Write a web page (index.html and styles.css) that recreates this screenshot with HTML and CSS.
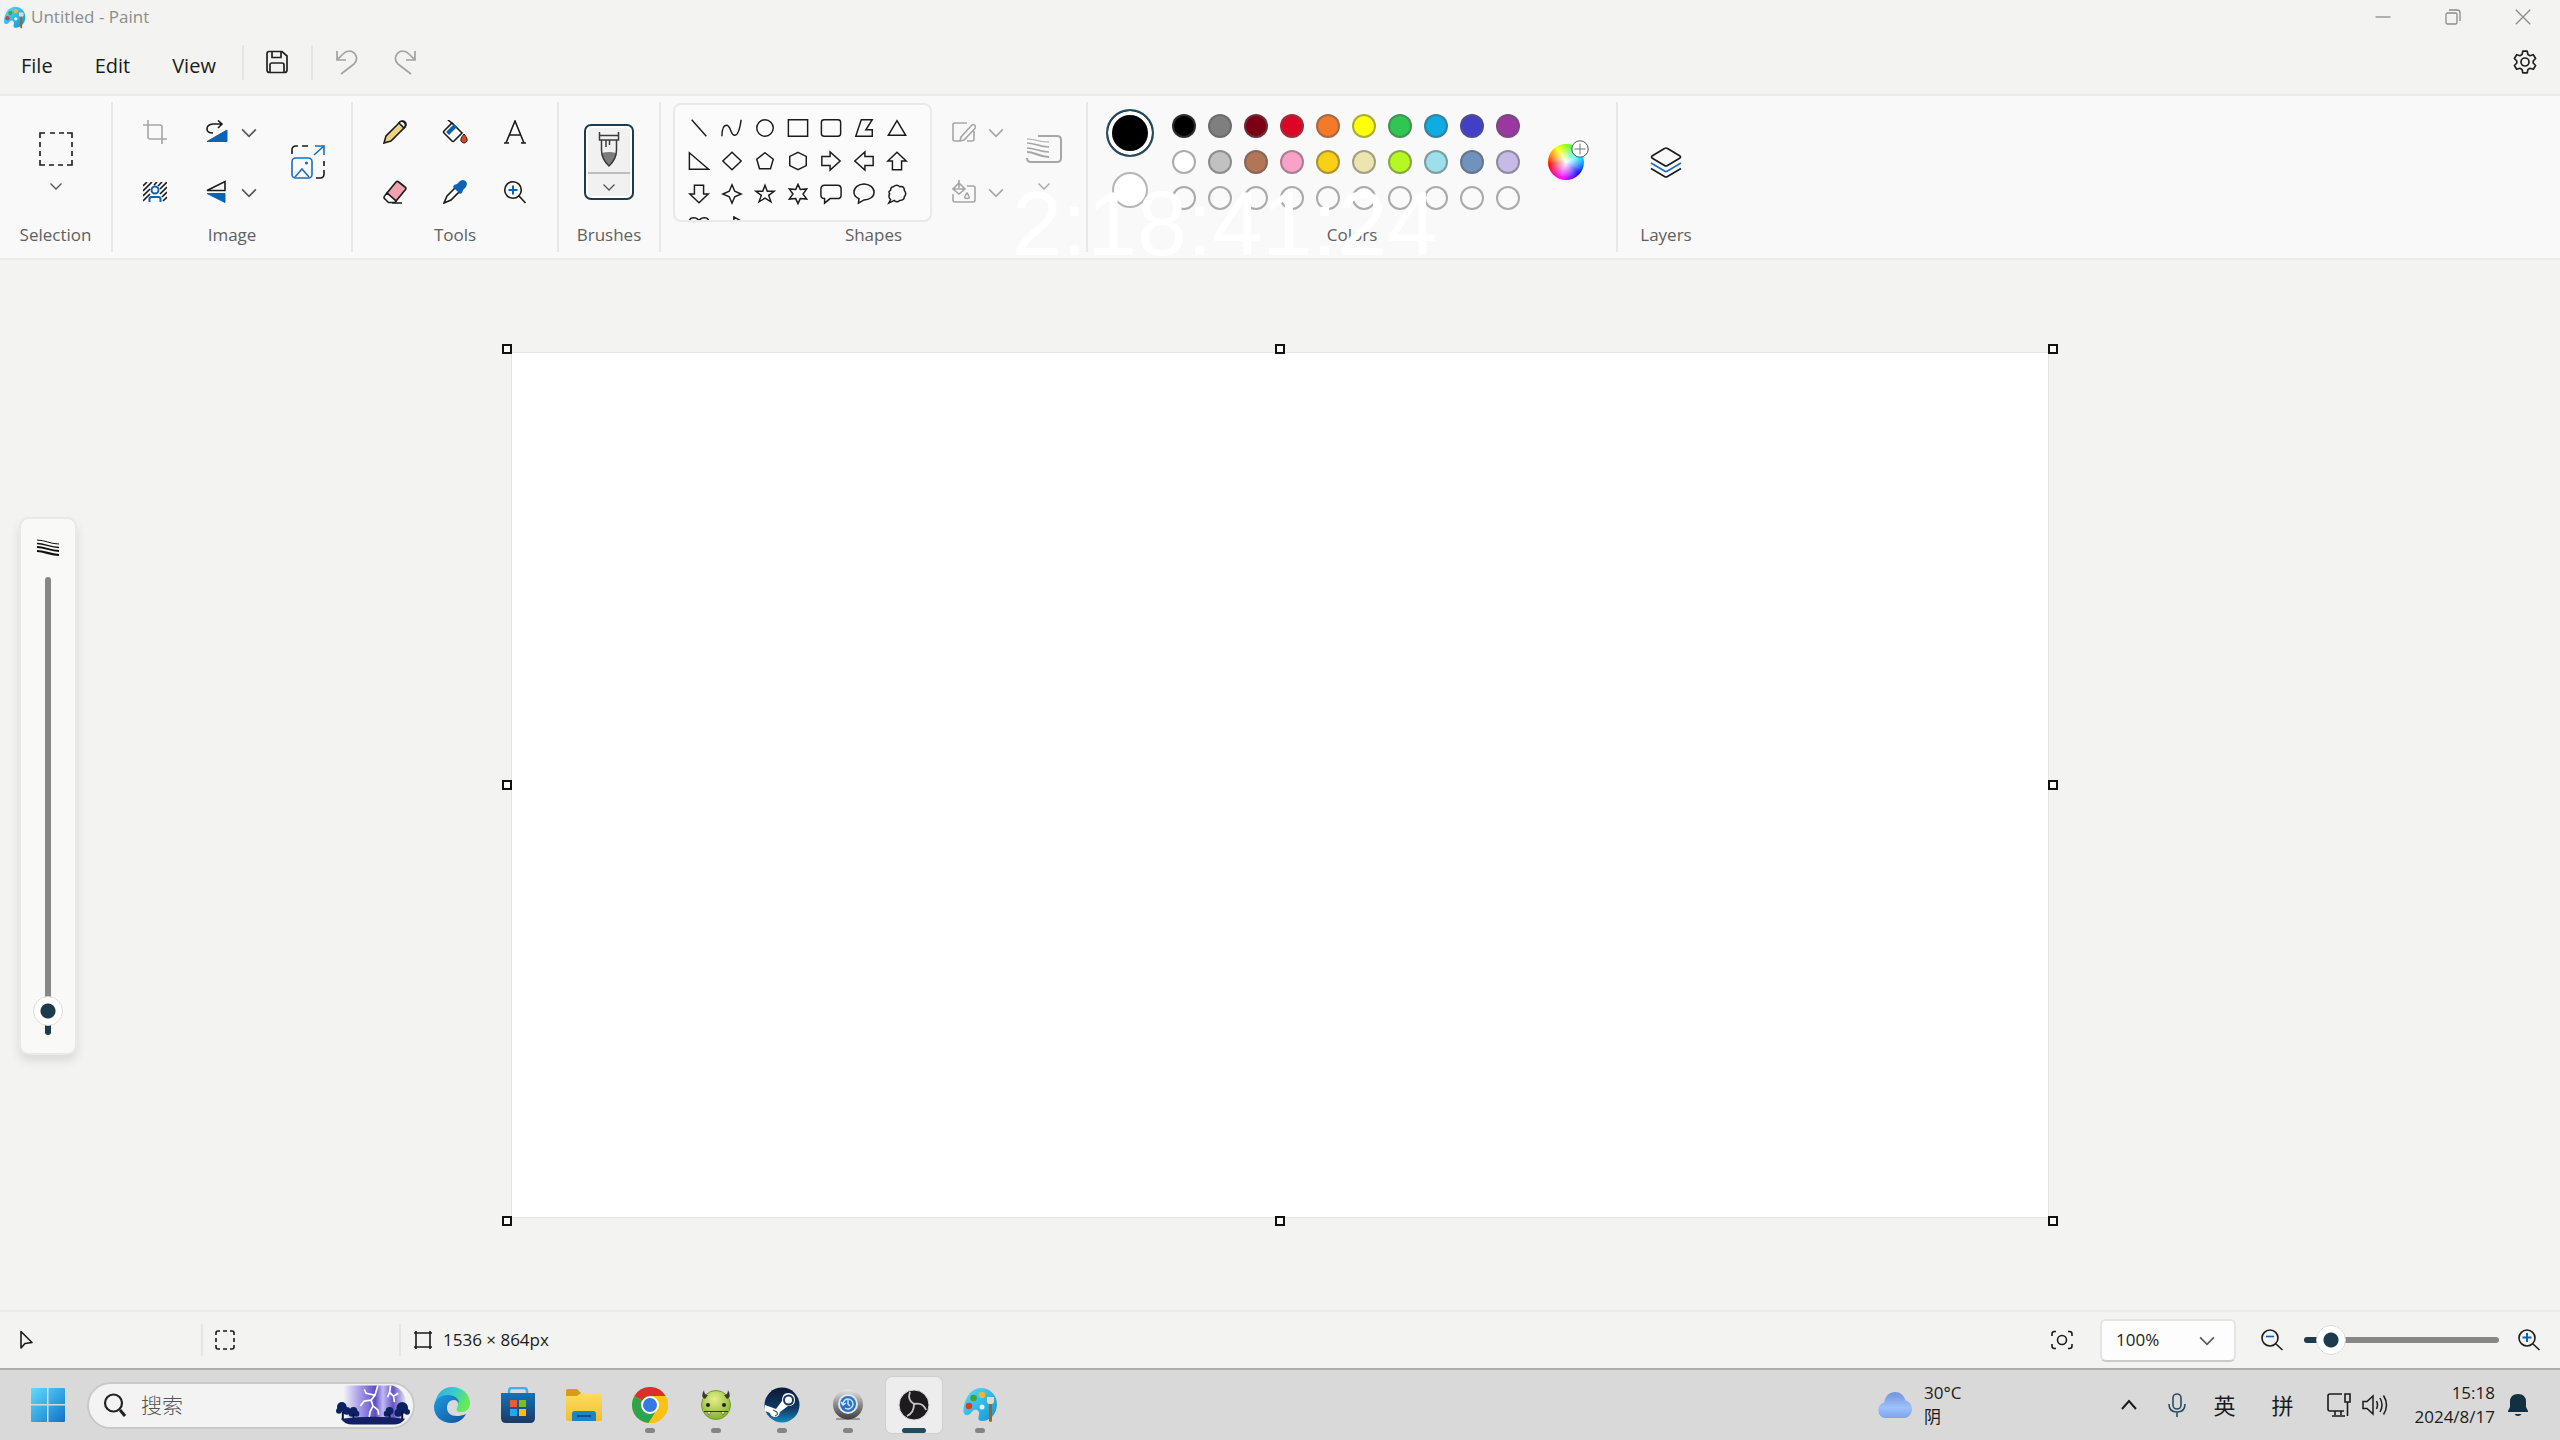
FILE: index.html
```html
<!DOCTYPE html>
<html lang="en">
<head>
<meta charset="utf-8">
<title>Untitled - Paint</title>
<link rel="stylesheet" href="styles.css">
</head>
<body>
<svg class="defs" aria-hidden="true">
  <defs>
    <symbol id="chev" viewBox="0 0 16 12"><path d="M2.500 3.500 8 9l5.500-5.500" fill="none" stroke="currentColor" stroke-width="1.300"/></symbol>
    <linearGradient id="pal" x1="0" y1="0" x2="1" y2="1"><stop offset="0" stop-color="#5fdcf7"/><stop offset="1" stop-color="#0c93d6"/></linearGradient>
    <symbol id="palette" viewBox="0 0 36 36">
      <path d="M19 1c9 0 16 7 16 16 0 10-7 17-15 17-4 0-4-3-3-6 1-4-2-6-5-5-3 2-4 6-8 5-3-1-3-5-2-9C4 9 10 1 19 1z" fill="url(#pal)"/>
      <circle cx="20" cy="20" r="2.500" fill="#dff6ff"/>
      <circle cx="7" cy="19" r="3.300" fill="#c8452c"/><circle cx="11.500" cy="11" r="3.300" fill="#3fa535"/><circle cx="20" cy="8" r="3.300" fill="#f3b81f"/>
      <path d="M25 10h7v5l-1.500 2h-4L25 15z" fill="#ead9bd"/><path d="M27 17h3v17q-1.500 2-3 0z" fill="#a5611f"/>
    </symbol>
    <linearGradient id="win" x1="0" y1="0" x2="1" y2="1"><stop offset="0" stop-color="#62dcfb"/><stop offset="1" stop-color="#0a74cc"/></linearGradient>
    <linearGradient id="sky" x1="0" y1="0" x2="1" y2="0"><stop offset="0" stop-color="#f3f3f3"/><stop offset=".3" stop-color="#9a8ce6"/><stop offset=".5" stop-color="#5d4fc4"/><stop offset=".62" stop-color="#c3b8f6"/><stop offset=".78" stop-color="#6455c8"/><stop offset="1" stop-color="#f3f3f3"/></linearGradient>
    <linearGradient id="edgeA" x1="0" y1="0" x2="1" y2="0.400"><stop offset="0" stop-color="#2fa9e0"/><stop offset=".5" stop-color="#38c8d2"/><stop offset="1" stop-color="#66ea58"/></linearGradient>
    <linearGradient id="edgeB" x1="0" y1="0" x2="1" y2="1"><stop offset="0" stop-color="#1c9be0"/><stop offset="1" stop-color="#12509c"/></linearGradient>
    <linearGradient id="bag" x1="0" y1="0" x2="0" y2="1"><stop offset="0" stop-color="#1272b8"/><stop offset="1" stop-color="#1d3a63"/></linearGradient>
    <linearGradient id="steam" x1="0" y1="0" x2="0" y2="1"><stop offset="0" stop-color="#0c1836"/><stop offset=".6" stop-color="#113a66"/><stop offset="1" stop-color="#1489bd"/></linearGradient>
    <linearGradient id="metal" x1="0" y1="0" x2="0" y2="1"><stop offset="0" stop-color="#e6e6e6"/><stop offset=".5" stop-color="#8b8b8b"/><stop offset="1" stop-color="#3b3b3b"/></linearGradient>
    <radialGradient id="imp" cx=".45" cy=".3" r=".7"><stop offset="0" stop-color="#e3f08a"/><stop offset="1" stop-color="#86b32a"/></radialGradient>
    <linearGradient id="cloud" x1="0" y1="0" x2="0" y2="1"><stop offset="0" stop-color="#7391dd"/><stop offset=".6" stop-color="#9cc2f8"/><stop offset="1" stop-color="#7ba4ee"/></linearGradient>
    <linearGradient id="folder" x1="0" y1="0" x2="0" y2="1"><stop offset="0" stop-color="#ffdc63"/><stop offset="1" stop-color="#f2bf2c"/></linearGradient>
  </defs>
</svg>

<header class="titlebar">
  <svg class="app-icon" viewBox="0 0 36 36"><use href="#palette"/></svg>
  <h1 class="title">Untitled - Paint</h1>
  <div class="window-controls">
    <button class="win-btn" aria-label="Minimize"><svg width="16" height="16" viewBox="0 0 16 16"><path d="M.5 8h15"/></svg></button>
    <button class="win-btn" aria-label="Restore"><svg width="16" height="16" viewBox="0 0 16 16"><rect x="1" y="4" width="11" height="11" rx="1.500"/><path d="M4 1h8q3 0 3 3v8"/></svg></button>
    <button class="win-btn" aria-label="Close"><svg width="16" height="16" viewBox="0 0 16 16"><path d="M.8.8l14.400 14.400M15.200.8.8 15.200"/></svg></button>
  </div>
</header>

<nav class="menubar">
  <div class="menus">
    <button class="menu">File</button>
    <button class="menu">Edit</button>
    <button class="menu">View</button>
  </div>
  <span class="vline"></span>
  <button class="quick" aria-label="Save"><svg width="24" height="24" viewBox="0 0 24 24"><path d="M4 1.500h13L22 6v14q0 2.500-2.500 2.500h-15Q2 22.500 2 20V4q0-2.500 2-2.500zM7 2v5.500h9V2M5 22v-7q0-2 2-2h10q2 0 2 2v7"/></svg></button>
  <span class="vline"></span>
  <button class="quick off" aria-label="Undo"><svg width="24" height="26" viewBox="0 0 24 26"><path d="M3 2v9h9M3 11l6-6c4-4 9-4 12 0 2 3 2 7-1 10L7 25"/></svg></button>
  <button class="quick off" aria-label="Redo"><svg width="24" height="26" viewBox="0 0 24 26"><path d="M21 2v9h-9M21 11l-6-6c-4-4-9-4-12 0-2 3-2 7 1 10l13 10"/></svg></button>
  <button class="quick settings" aria-label="Settings"><svg width="24" height="24" viewBox="0 0 24 24"><circle cx="12" cy="12" r="4"/><path d="M9.800 1.200h4.400l.8 3.400 2 1.100 3.300-1L22.600 8.500 20.200 11v2l2.400 2.500-2.300 3.800-3.300-1-2 1.100-.8 3.400H9.800L9 19.400l-2-1.100-3.300 1-2.300-3.800L3.800 13v-2L1.400 8.500l2.300-3.800 3.300 1 2-1.100z" stroke-linejoin="round"/></svg></button>
</nav>

<section class="ribbon" aria-label="Ribbon">
  <div class="group selection">
    <div class="group-body">
      <button class="tool stack" aria-label="Selection"><svg width="34" height="34" viewBox="0 0 34 34"><path d="M1 6V1h5M11 1h5M20 1h5M28 1h5v5M33 10v5M33 19v5M33 28v5h-5M24 33h-5M15 33h-5M6 33H1v-5M1 24v-5M1 15v-5"/></svg><svg class="chev small"><use href="#chev"/></svg></button>
    </div>
    <h2 class="label">Selection</h2>
  </div>

  <div class="group image">
    <div class="group-body">
      <div class="pair">
        <button class="tool cell off" aria-label="Crop"><svg width="24" height="24" viewBox="0 0 24 24"><path d="M5 0v17q0 2 2 2h17M0 5h17q2 0 2 2v17"/></svg></button>
        <button class="tool cell" aria-label="Remove background"><svg width="24" height="20" viewBox="0 0 24 20"><path d="M0 4 4 0M0 9 9 0M0 14 7 7M0 19 7 12M14 0l-3 3M19 0l-4 4M24 0l-7 7M24 5l-7 7M24 10l-5 5M24 15l-4 4"/><path d="M6.500 20v-3q0-2 2-2h7q2 0 2 2v3" stroke="#0c63b4" stroke-width="2"/><circle cx="12" cy="8" r="3.500" stroke="#0c63b4" stroke-width="2"/></svg></button>
      </div>
      <div class="pair">
        <div class="split"><button class="tool" aria-label="Rotate"><svg width="24" height="24" viewBox="0 0 24 24"><path d="M16 4H8Q2 4.500 2 9q0 4 6 4M13 .5 17 4l-4 4"/><path d="M2 21.500 22 10v11.500z" fill="#0c63b4" stroke="#0c63b4" stroke-width="1"/></svg></button><button class="tool" aria-label="Rotate options"><svg class="chev"><use href="#chev"/></svg></button></div>
        <div class="split"><button class="tool" aria-label="Flip"><svg width="24" height="24" viewBox="0 0 24 24"><path d="M2 10.500 20 1.500v9z"/><path d="M2 13.500h18v9z" fill="#0c63b4" stroke="#0c63b4" stroke-width="1"/></svg></button><button class="tool" aria-label="Flip options"><svg class="chev"><use href="#chev"/></svg></button></div>
      </div>
      <button class="tool resize" aria-label="Resize"><svg width="34" height="34" viewBox="0 0 34 34"><path d="M1 9V5q0-4 4-4h2M11 1h6M33 16v5M33 25v4q0 4-4 4h-4"/><g stroke="#1a6fc0"><path d="M23 10 33 1M24 1h9v9"/><rect x="1" y="13" width="20" height="20" rx="3.500"/><path d="m4 32 7-8 7 8"/></g><circle cx="15.500" cy="18" r="1.600" fill="#1a6fc0" stroke="none"/></svg></button>
    </div>
    <h2 class="label">Image</h2>
  </div>

  <div class="group tools">
    <div class="group-body tool-grid">
      <button class="tool" aria-label="Pencil"><svg width="24" height="24" viewBox="0 0 24 24"><path d="M1 23l2-7L17 2q3-2 5 0t0 5L8 21z" fill="#ecd283"/><path d="M16 3q2-3 5-1 3 3 0 6z" fill="#fff"/></svg></button>
      <button class="tool" aria-label="Fill"><svg width="26" height="24" viewBox="0 0 26 24"><path d="M10 3 20 13l-8 8q-1 1-2 0L2 13q-1-1 0-2z" fill="#fff"/><path d="m4 12 8-8 3 3-8 8z" fill="#0c63b4" stroke="none"/><path d="M6 0l5 4"/><path d="M22 14q4 5 3 7-1 2-3 2t-3-2q-1-2 3-7z" fill="#d8492a" stroke-width="1"/></svg></button>
      <button class="tool" aria-label="Text"><svg width="24" height="24" viewBox="0 0 24 24"><path d="M3 23 12 1l9 22M6 15h12M1 23h5M18 23h5"/></svg></button>
      <button class="tool" aria-label="Eraser"><svg width="24" height="24" viewBox="0 0 24 24"><path d="M15 1.500 22 7q1.500 1 .5 2.500L13 21l-9-8L13 2q1-1 2-.5z" fill="#f0a3ae"/><path d="m4 13 9 8-1.500 1.500h-6L2 19q-2-1.500 0-3.500zM9 23h10" fill="#fff"/></svg></button>
      <button class="tool" aria-label="Color picker"><svg width="24" height="24" viewBox="0 0 24 24"><path d="M13 7 4 16l-3 7 7-3 9-9z" fill="#fff"/><path d="m11 5 3-1 3-3q3-2 5.500 0t.5 6l-3 3-1 3-2 1-7-7z" fill="#0c63b4" stroke="none"/></svg></button>
      <button class="tool" aria-label="Magnifier"><svg width="24" height="24" viewBox="0 0 24 24"><circle cx="10" cy="10" r="8.300"/><path d="m16 16 6.500 7"/><path d="M5.500 10h9M10 5.500v9" stroke="#0c63b4" stroke-width="2"/></svg></button>
    </div>
    <h2 class="label">Tools</h2>
  </div>

  <div class="group brushes">
    <div class="group-body">
      <button class="brush-btn" aria-label="Brushes"><svg width="24" height="36" viewBox="0 0 24 36" fill="none" stroke="#3a3a3a" stroke-width="1.500"><path d="M5 21q7-2 14 0 0 7-7 13-7-6-7-13z" fill="#7c7c7c" stroke="none"/><path d="M2.500 0v8h19V0M2.500 3.500h19M4.500 8v10q0 9 7.500 16 7.500-7 7.500-16V8M9 8v7M12.500 8v5"/></svg><span class="brush-rule"></span><svg class="chev small"><use href="#chev"/></svg></button>
    </div>
    <h2 class="label">Brushes</h2>
  </div>

  <div class="group shapes">
    <div class="group-body">
      <div class="shape-box">
        <button class="tool" aria-label="Line"><svg viewBox="0 0 24 24"><path d="M4 3l16 18"/></svg></button>
        <button class="tool" aria-label="Curve"><svg viewBox="0 0 24 24"><path d="M1 21c0-8 2-12 5-12 5 0 4 11 9 11 4 0 6-10 7-17"/></svg></button>
        <button class="tool" aria-label="Oval"><svg viewBox="0 0 24 24"><circle cx="12" cy="12" r="9"/></svg></button>
        <button class="tool" aria-label="Rectangle"><svg viewBox="0 0 24 24"><path d="M1.500 3h21v18h-21z"/></svg></button>
        <button class="tool" aria-label="Rounded rectangle"><svg viewBox="0 0 24 24"><rect x="1.500" y="3" width="21" height="18" rx="3"/></svg></button>
        <button class="tool" aria-label="Polygon"><svg viewBox="0 0 24 24"><path d="M9 3h12l-7 11h7v7H3z"/></svg></button>
        <button class="tool" aria-label="Triangle"><svg viewBox="0 0 24 24"><path d="m12 4 9.500 16h-19z"/></svg></button>
        <button class="tool" aria-label="Right triangle"><svg viewBox="0 0 24 24"><path d="M1.500 3v18h21z"/></svg></button>
        <button class="tool" aria-label="Diamond"><svg viewBox="0 0 24 24"><path d="m12 2.500 10 9.500-10 9.500L2 12z"/></svg></button>
        <button class="tool" aria-label="Pentagon"><svg viewBox="0 0 24 24"><path d="m12 3 9 7-3 10.500H6L3 10z"/></svg></button>
        <button class="tool" aria-label="Hexagon"><svg viewBox="0 0 24 24"><path d="m12 2.500 9 4.500v10l-9 4.500L3 17V7z"/></svg></button>
        <button class="tool" aria-label="Right arrow"><svg viewBox="0 0 24 24"><path d="M2 7h9V2l11 10-11 10v-5H2z"/></svg></button>
        <button class="tool" aria-label="Left arrow"><svg viewBox="0 0 24 24"><path d="M22 7h-9V2L2 12l11 10v-5h9z"/></svg></button>
        <button class="tool" aria-label="Up arrow"><svg viewBox="0 0 24 24"><path d="M7 21.500V12H2l10-9.500L22 12h-5v9.500z"/></svg></button>
        <button class="tool" aria-label="Down arrow"><svg viewBox="0 0 24 24"><path d="M7 2.500V12H2l10 9.500L22 12h-5V2.500z"/></svg></button>
        <button class="tool" aria-label="Four-point star"><svg viewBox="0 0 24 24"><path d="m12 2 3 7 7 3-7 3-3 7-3-7-7-3 7-3z"/></svg></button>
        <button class="tool" aria-label="Five-point star"><svg viewBox="0 0 24 24"><path d="m12 2.500 2.500 6.500H22l-6 4.500 2.500 7L12 16.500l-6.500 4 2.500-7L2 9h7.500z"/></svg></button>
        <button class="tool" aria-label="Six-point star"><svg viewBox="0 0 24 24"><path d="m12 1.500 2.500 5.500 7-.5-4 5.500 4 5.500-7-.5-2.500 5.500L9.500 17l-7 .5 4-5.500-4-5.500 7 .5z"/></svg></button>
        <button class="tool" aria-label="Rounded callout"><svg viewBox="0 0 24 24"><path d="M5 2.500h14q4 0 4 4V13q0 4-4 4h-8l-6 5v-5q-4 0-4-4V6.500q0-4 4-4z"/></svg></button>
        <button class="tool" aria-label="Oval callout"><svg viewBox="0 0 24 24"><path d="M12 1c6 0 11 4 11 9s-5 8.500-11 8.500L6 22l.5-5C3 15.500 1 13 1 10c0-5 5-9 11-9z"/></svg></button>
        <button class="tool" aria-label="Cloud callout"><svg viewBox="0 0 24 24"><path d="M8 4q4-3 7 0 5-1 5 4 3 4 0 7 0 4-5 4-3 3-6 0l-6 3 2-4q-3-3-1-6-2-3 1-4 0-4 3-4z"/></svg></button>
        <button class="tool" aria-label="Heart"><svg viewBox="0 0 24 24"><path d="M12 21 4 13C-1 8 1 2 6 2q4 0 6 3 2-3 6-3c5 0 7 6 2 11z"/></svg></button>
        <button class="tool" aria-label="Lightning"><svg viewBox="0 0 24 24"><path d="M14 1l9 5-3 5 3 8-10-6-5-4 6-2z"/></svg></button>
      </div>
      <div class="pair">
        <div class="split"><button class="tool off" aria-label="Shape outline"><svg width="24" height="24" viewBox="0 0 24 24"><path d="M15 3H3Q1 3 1 5v14q0 2 2 2h5M22.500 5q2 2 0 4L12 20l-4 1 1-4L20 5q1-1 2.500 0zM22 11v8q0 2-2 2h-5"/></svg></button><button class="tool off" aria-label="Outline options"><svg class="chev"><use href="#chev"/></svg></button></div>
        <div class="split"><button class="tool off" aria-label="Shape fill"><svg width="24" height="24" viewBox="0 0 24 24"><path d="M1 14v6q0 2 2 2h18q2 0 2-2V8q0-2-2-2h-6M7 3l6 6-6 5-6-5zM7 0v8M1 9h12M15 13q3 4 2 5t-4 0q-1-1 2-5z"/></svg></button><button class="tool off" aria-label="Fill options"><svg class="chev"><use href="#chev"/></svg></button></div>
      </div>
      <button class="tool stack off" aria-label="Size"><svg width="36" height="34" viewBox="0 0 36 34"><path d="M12 4h19q4 0 4 4v18q0 4-4 4H5q-4 0-4-4" stroke-width="2"/><path d="M1 7c8 0 12 3 22 3" stroke-width="1"/><path d="M1 11c8 0 12 4 22 4M1 16c8 0 12 4 22 4"/><path d="M1 20c8 0 12 5 22 5" stroke-width="2.200"/></svg><svg class="chev small"><use href="#chev"/></svg></button>
    </div>
    <h2 class="label">Shapes</h2>
  </div>

  <div class="group colors">
    <div class="group-body">
      <div class="current">
        <button class="primary" aria-label="Color 1"></button>
        <button class="secondary" aria-label="Color 2"></button>
      </div>
      <div class="swatches">
        <button class="swatch" aria-label="Black" style="--c:#000"></button>
        <button class="swatch" aria-label="Gray" style="--c:#7f7f7f"></button>
        <button class="swatch" aria-label="Dark red" style="--c:#7c0015"></button>
        <button class="swatch" aria-label="Red" style="--c:#dd0525"></button>
        <button class="swatch" aria-label="Orange" style="--c:#f47a2a"></button>
        <button class="swatch" aria-label="Yellow" style="--c:#ffff0a"></button>
        <button class="swatch" aria-label="Green" style="--c:#2fc652"></button>
        <button class="swatch" aria-label="Turquoise" style="--c:#10abe2"></button>
        <button class="swatch" aria-label="Indigo" style="--c:#403fc6"></button>
        <button class="swatch" aria-label="Purple" style="--c:#9a37a0"></button>
        <button class="swatch" aria-label="White" style="--c:#fff"></button>
        <button class="swatch" aria-label="Light gray" style="--c:#c1c1c1"></button>
        <button class="swatch" aria-label="Brown" style="--c:#b27556"></button>
        <button class="swatch" aria-label="Rose" style="--c:#f9a2c8"></button>
        <button class="swatch" aria-label="Gold" style="--c:#f9d015"></button>
        <button class="swatch" aria-label="Light yellow" style="--c:#ede5b0"></button>
        <button class="swatch" aria-label="Lime" style="--c:#b5f824"></button>
        <button class="swatch" aria-label="Light turquoise" style="--c:#9de0ea"></button>
        <button class="swatch" aria-label="Blue-gray" style="--c:#7092bd"></button>
        <button class="swatch" aria-label="Lavender" style="--c:#c6bbe6"></button>
        <button class="swatch" aria-label="Custom 1"></button>
        <button class="swatch" aria-label="Custom 2"></button>
        <button class="swatch" aria-label="Custom 3"></button>
        <button class="swatch" aria-label="Custom 4"></button>
        <button class="swatch" aria-label="Custom 5"></button>
        <button class="swatch" aria-label="Custom 6"></button>
        <button class="swatch" aria-label="Custom 7"></button>
        <button class="swatch" aria-label="Custom 8"></button>
        <button class="swatch" aria-label="Custom 9"></button>
        <button class="swatch" aria-label="Custom 10"></button>
      </div>
      <button class="wheel" aria-label="Edit colors"><svg class="wheel-plus" viewBox="0 0 18 18"><circle cx="9" cy="9" r="8.200" fill="#fff" stroke="#555"/><path d="M3.500 9h11M9 3.500v11" stroke="#777"/></svg></button>
    </div>
    <h2 class="label">Colors</h2>
    <p class="timecode">2:18:41:24</p>
  </div>

  <div class="group layers">
    <div class="group-body">
      <button class="tool" aria-label="Layers"><svg width="32" height="32" viewBox="0 0 32 32"><path d="M14.500 2.500q1.500-1 3 0L30 10q1 1 0 2l-12.500 7.500q-1.500 1-3 0L2 12q-1-1 0-2z"/><path d="M1 17l13.500 8q1.500 1 3 0L31 17" stroke="#1a6fc0"/><path d="M1 22.500l13.500 8q1.500 1 3 0L31 22.500"/></svg></button>
    </div>
    <h2 class="label">Layers</h2>
  </div>
</section>

<main class="workspace">
  <div class="size-panel">
    <svg width="24" height="18" viewBox="0 0 24 18" fill="none" stroke="#111"><path d="M1 1c8 0 13 4 22 4" stroke-width="1"/><path d="M1 4.500c8 0 13 4 22 4" stroke-width="1.400"/><path d="M1 8c8 0 13 4 22 4" stroke-width="1.800"/><path d="M1 12c8 0 13 4 22 4" stroke-width="2.200"/></svg>
    <input class="range tall" type="range" min="0" max="200" value="4" aria-label="Brush size">
  </div>
  <div class="canvas">
    <i class="handle t l"></i><i class="handle t c"></i><i class="handle t r"></i>
    <i class="handle m l"></i><i class="handle m r"></i>
    <i class="handle b l"></i><i class="handle b c"></i><i class="handle b r"></i>
  </div>
</main>

<footer class="statusbar">
  <div class="status-cell pos"><svg width="16" height="20" viewBox="0 0 16 20"><path d="M2 1.500v16.500l4-4.500 7-1z" stroke-linejoin="round"/></svg></div>
  <span class="vline"></span>
  <div class="status-cell sel"><svg width="20" height="20" viewBox="0 0 20 20"><path d="M1 5V3q0-2 2-2h2M8 1h4M15 1h2q2 0 2 2v2M19 8v4M19 15v2q0 2-2 2h-2M12 19H8M5 19H3q-2 0-2-2v-2M1 12V8"/></svg></div>
  <span class="vline"></span>
  <div class="status-cell dim"><svg width="20" height="20" viewBox="0 0 20 20"><path d="M3 1v18M17 1v18M1 3h18M1 17h18"/></svg><span>1536 × 864px</span></div>
  <div class="zoom">
    <button class="tool" aria-label="Fit to window"><svg width="22" height="20" viewBox="0 0 22 20"><circle cx="11" cy="10" r="4.500"/><path d="M1 6V4q0-2.500 2.500-2.500H5M17 1.500h1.500Q21 1.500 21 4v2M21 14v2q0 2.500-2.500 2.500H17M5 18.500H3.500Q1 18.500 1 16v-2"/></svg></button>
    <div class="combo"><select aria-label="Zoom level"><option>100%</option></select><svg class="chev"><use href="#chev"/></svg></div>
    <button class="tool" aria-label="Zoom out"><svg width="24" height="24" viewBox="0 0 24 24"><circle cx="10" cy="10" r="8"/><path d="m16 16 6.500 6"/><path d="M6 8.500h8" stroke="#0c63b4"/></svg></button>
    <input class="range wide" type="range" min="0" max="100" value="7" aria-label="Zoom">
    <button class="tool" aria-label="Zoom in"><svg width="24" height="24" viewBox="0 0 24 24"><circle cx="10" cy="10" r="8"/><path d="m16 16 6.500 6"/><path d="M5.500 9.500h9M10 5v9" stroke="#0c63b4" stroke-width="2"/></svg></button>
  </div>
</footer>

<div class="taskbar">
  <button class="start" aria-label="Start"><svg width="36" height="36" viewBox="0 0 36 36"><path d="M1 2q0-1 1-1h15v16H1zM18.500 1H34q1 0 1 1v15H18.500zM1 18.500h16V35H2q-1 0-1-1zM18.500 18.500H35V34q0 1-1 1H18.500z" fill="url(#win)"/></svg></button>
  <label class="search">
    <svg width="24" height="24" viewBox="0 0 24 24"><circle cx="10.500" cy="10" r="8.500"/><path d="m17 17 5 6" stroke-width="3"/></svg>
    <input type="text" placeholder="搜索" aria-label="搜索">
    <svg class="storm" width="74" height="42" viewBox="0 0 76 42"><path d="M8 1h50q13 4 15 20-1 12-13 17H14Q6 30 8 1z" fill="url(#sky)"/><g fill="none" stroke="#fff"><path d="M43 1l-3 10-4 5 2 6-3 6-1 6M40 11l-9-2-2-4M36 16l-7 1-4 5M38 22l5 4 1 5" stroke-width="1.700"/><path d="M56 1l-1 7 4 4 1 6M59 12l5-3M55 8l-2 5" stroke-width="1.700"/></g><g fill="#0c2163"><circle cx="6" cy="23" r="5"/><circle cx="11" cy="27" r="4"/><circle cx="3" cy="27" r="3"/><circle cx="18" cy="27" r="4"/><circle cx="21" cy="30" r="3"/><circle cx="16" cy="30" r="3"/><circle cx="68" cy="24" r="6"/><circle cx="73" cy="28" r="3"/><circle cx="64" cy="29" r="4"/><circle cx="55" cy="27" r="4"/><circle cx="52" cy="30" r="3"/></g><path d="M7 28v8M18 30v6M55 30v6M68 28v8" stroke="#071036" stroke-width="2"/><path d="M5 35q33-4 66 0-4 6-12 6H17q-8 0-12-6z" fill="#131f66"/></svg>
  </label>
  <div class="apps">
    <button class="app" aria-label="Edge"><svg viewBox="0 0 36 36"><path d="M1 17C2 7 9 0 18 0c11 0 18 8 18 16 0 6-4 9-9 9-4 0-5-2-4-4 3-5-1-10-8-10C8 11 3 14 1 17z" fill="url(#edgeA)"/><path d="M0 20c0-6 5-12 14-12 7 0 11 4 11 8-1-2-3-3-5-3-5 0-7 4-7 8 0 6 7 11 19 6-3 6-9 9-14 9C7 36 0 29 0 20z" fill="url(#edgeB)"/></svg></button>
    <button class="app" aria-label="Store"><svg viewBox="0 0 36 36"><path d="M9 7V4q0-3 3-3h12q3 0 3 3v3" fill="none" stroke="#37b5ea" stroke-width="2.500"/><path d="M1 6h34v25q0 5-5 5H6q-5 0-5-5z" fill="url(#bag)"/><path d="M10 13h7v7h-7z" fill="#ec5a3b"/><path d="M19 13h7v7h-7z" fill="#7dbb29"/><path d="M10 22h7v7h-7z" fill="#22a8ef"/><path d="M19 22h7v7h-7z" fill="#fcbb18"/></svg></button>
    <button class="app" aria-label="File Explorer"><svg viewBox="0 0 36 36"><path d="M0 4q0-2 2-2h9l4 4v8H0z" fill="#d89c12"/><path d="M0 9h11l4-3h19q2 0 2 2v25q0 1-2 1H2q-2 0-2-2z" fill="url(#folder)"/><path d="M6 34v-7q0-3 3-3h18q3 0 3 3v7z" fill="#1b83ca"/><path d="M11 29h14" stroke="#0a5390" stroke-width="2"/></svg></button>
    <button class="app open" aria-label="Chrome"><svg viewBox="0 0 36 36"><circle cx="18" cy="18" r="18" fill="#fbc116"/><path d="M18 18 2.400 9A18 18 0 0 1 33.600 9z" fill="#dc2f28"/><path d="M18 18 2.400 9a18 18 0 0 0 14.100 27L26 21z" fill="#2ea34a"/><path d="M18 9h15.600A18 18 0 0 1 16.500 36L26 22z" fill="#fbc116"/><circle cx="18" cy="18" r="9" fill="#fff"/><circle cx="18" cy="18" r="7" fill="#3479e4"/></svg></button>
    <button class="app open" aria-label="Imp"><svg viewBox="0 0 36 36"><circle cx="18" cy="18" r="14.500" fill="url(#imp)" stroke="#78992f"/><path d="M6 3q0 5 4 5l-3 4q-5-2-1-9zM30 3q0 5-4 5l3 4q5-2 1-9z" fill="#3a3a30"/><circle cx="10" cy="18" r="2" fill="#222"/><circle cx="26" cy="18" r="2" fill="#222"/><path d="M6 24.500h24" stroke="#333"/><path d="M9 25l2 3 2-3M23 25l2 3 2-3" fill="#eee" stroke="#555" stroke-width=".7"/></svg></button>
    <button class="app open" aria-label="Steam"><svg viewBox="0 0 36 36"><circle cx="18" cy="18" r="17.500" fill="url(#steam)"/><path d="M1 18l11 4 6-8q0-8 6-8 7 0 7 7 0 6-7 6l-8 6q-1 5-5 5-4 0-5-4l-5-2z" fill="#fff"/><circle cx="24.500" cy="13" r="4.500" fill="#fff" stroke="#16395f" stroke-width="2"/><path d="M9 23l4 2q2 3-2 4" fill="none" stroke="#16395f"/></svg></button>
    <button class="app open" aria-label="Backup"><svg viewBox="0 0 36 36"><path d="M6 32h24" stroke="#999" stroke-width="2"/><circle cx="18" cy="17.500" r="15" fill="url(#metal)"/><circle cx="18" cy="17" r="10" fill="#dfe6ee"/><circle cx="18" cy="17" r="8" fill="#2a73c4"/><path d="M13 17a5 5 0 1 1 2 4M18 13v4l2 2M11 15l2 3 3-2" fill="none" stroke="#cfe6ff" stroke-width="1.400"/></svg></button>
    <button class="app open active" aria-label="OBS"><svg viewBox="0 0 36 36"><circle cx="18" cy="18" r="15" fill="#1d1b1e" stroke="#dadada"/><path d="M14 5q-3 8 4 12 9-2 12 6M18 17q0 9-7 12" fill="none" stroke="#c6c6c6" stroke-width="1.800"/></svg></button>
    <button class="app open" aria-label="Paint"><svg viewBox="0 0 36 36"><use href="#palette"/></svg></button>
  </div>
  <button class="weather" aria-label="Weather"><svg width="36" height="32" viewBox="0 0 36 30"><path d="M8 28a8 8 0 0 1-1-15.500Q9 2 18 2q8 0 10.500 8.500A9 9 0 0 1 28 28z" fill="url(#cloud)"/></svg><span class="two-line"><span>30°C</span><span>阴</span></span></button>
  <div class="tray">
    <button class="tray-btn" aria-label="Hidden icons"><svg width="16" height="12" viewBox="0 0 16 12"><path d="M1 10l7-8 7 8" stroke-width="2"/></svg></button>
    <button class="tray-btn mic" aria-label="Microphone"><svg width="18" height="24" viewBox="0 0 18 24"><rect x="5" y="1" width="8" height="15" rx="4"/><path d="M1 11q0 8 8 8t8-8M9 19v5"/></svg></button>
    <button class="tray-btn ime">英</button>
    <button class="tray-btn ime">拼</button>
    <button class="tray-btn" aria-label="Network"><svg width="26" height="24" viewBox="0 0 26 24"><path d="M16 1H4Q2 1 2 3v13q0 2 2 2h14M19 1h5v8h-5zM21.500 9v14M9 18v4M15 18v4M6 23h13" stroke-width="1.600"/></svg></button>
    <button class="tray-btn" aria-label="Volume"><svg width="26" height="22" viewBox="0 0 26 22"><path d="M1 7.500h4l6-5.500v18l-6-5.500H1zM14.500 7q2 4 0 8M18 4q4 7 0 14M21.500 1.500q6 9.500 0 19" stroke-width="1.500"/></svg></button>
    <button class="clock"><span>15:18</span><span>2024/8/17</span></button>
    <button class="tray-btn bell" aria-label="Notifications"><svg width="22" height="24" viewBox="0 0 22 24"><path d="M11 1q8 0 8 8v5l2 4v1H1v-1l2-4V9q0-8 8-8zM7.500 21h7q-1 2-3.500 2t-3.500-2z" fill="#123040" stroke="none"/></svg></button>
  </div>
</div>
</body>
</html>
```
FILE: styles.css
```css
* { box-sizing: border-box; }

body {
  margin: 0;
  min-height: 100vh;
  display: flex;
  flex-direction: column;
  background: #f3f3f1;
  color: #1b1b1b;
  font: 17px/24px "Open Sans", "Noto Sans CJK SC", sans-serif;
}

.defs { position: absolute; width: 0; height: 0; }

button, select, input { font: inherit; color: inherit; }
button { background: none; border: 0; padding: 0; margin: 0; }
svg { display: block; flex: none; }
h1, h2, p { margin: 0; font-weight: 400; }

.chev { width: 20px; height: 15px; color: #555; }
.chev.small { width: 16px; height: 12px; }

/* Title bar */
.titlebar { display: flex; align-items: center; height: 36px; padding: 0 2px 2px 3px; }
.app-icon { width: 23px; height: 23px; }
.title { margin-left: 5px; font-size: 17px; color: #8c8c8c; }
.window-controls { display: flex; margin-left: auto; }
.win-btn { display: grid; place-items: center; width: 70px; height: 34px; }
.win-btn svg { fill: none; stroke: #8c8c8c; stroke-width: 1.300; }

/* Menu bar */
.menubar { display: flex; align-items: center; height: 60px; padding: 0 23px 6px 21px; border-bottom: 2px solid #eaeae9; }
.menus { display: flex; gap: 42px; padding-top: 7px; margin-right: 26px; }
.menu { font-size: 20px; }
.vline { width: 2px; height: 35px; background: #e5e5e4; }
.quick { display: grid; place-items: center; width: 59px; height: 36px; }
.quick svg { fill: none; stroke: #222; stroke-width: 1.700; }
.vline + .quick { width: 67px; }
.quick.off svg { stroke: #a2a2a2; }
.quick.off + .off { width: 52px; }
.quick.settings { width: 24px; margin-left: auto; }

/* Ribbon */
.ribbon { display: flex; height: 164px; padding: 6px 0; background: #f9f9f9; border-bottom: 2px solid #eaeae9; }
.group { display: flex; flex-direction: column; align-items: center; border-right: 2px solid #e8e8e8; }
.group.layers { border-right: 0; }
.group-body { display: flex; align-items: center; justify-content: center; height: 120px; }
.label { font-size: 17px; line-height: 26px; color: #606060; }
.tool { display: grid; place-items: center; color: #1b1b1b; }
.tool svg { fill: none; stroke: currentColor; stroke-width: 1.600; }
.tool.off, .off .chev { color: #a6a6a6; }
.stack { gap: 14px; }
.selection { width: 113px; }
.image, .tools { padding: 0 12px; }
.pair { display: grid; grid-template-rows: 60px 60px; align-items: center; }
.cell { width: 60px; }
.split { display: flex; align-items: center; gap: 10px; }
.image .pair + .pair { margin-left: 20px; }
.resize { width: 62px; margin-left: 18px; }
.tool-grid { display: grid; grid-template: 60px 60px / repeat(3, 60px); }

.brushes { width: 102px; }
.brush-btn {
  display: flex; flex-direction: column; align-items: center;
  width: 50px; height: 76px; padding-top: 6px;
  background: #f1f1f1; border: 2px solid #1b3c50; border-radius: 7px; box-shadow: inset 0 0 0 2px #fff;
}
.brush-rule { width: 42px; height: 2px; margin: 4px 0 7px; background: #bdbdbd; }

.shapes .group-body { padding: 0 24px 0 12px; }
.shape-box {
  display: grid; grid-template-columns: repeat(7, 33px); grid-auto-rows: 33px; align-content: start;
  width: 259px; height: 119px; padding: 7px 7px 0; overflow: hidden;
  background: #fbfbfb; border: 2px solid #e9e9e9; border-radius: 8px;
}
.shape-box svg { width: 22px; height: 22px; }
.shapes .pair { margin: 0 20px; }

/* Colour pickers */
.colors { position: relative; }
.colors .group-body { padding: 0 26px 0 18px; }
.current { display: grid; justify-items: center; align-self: flex-start; gap: 15px; padding-top: 7px; }
.primary { width: 48px; height: 48px; border-radius: 50%; background: #000; border: 2px solid #274a60; box-shadow: inset 0 0 0 4px #fff; }
.secondary { width: 36px; height: 36px; border-radius: 50%; background: #fff; border: 2px solid #b5b5b5; }
.swatches { display: grid; grid-template-columns: repeat(10, 24px); gap: 12px; margin: 0 28px 0 18px; }
.swatch { height: 24px; border-radius: 50%; background: var(--c, #fafafa); border: 2px solid rgba(90, 90, 90, .5); }
.wheel {
  position: relative; width: 36px; height: 36px; margin-right: 6px; border-radius: 50%;
  background: radial-gradient(circle, #fff, rgba(255, 255, 255, 0) 70%), conic-gradient(#8f0, #0f8, #0ff, #08f, #00f, #80f, #f0f, #f08, #f00, #f80, #ff0, #8f0);
}
.wheel-plus { position: absolute; top: -4px; right: -5px; width: 18px; height: 18px; }
.timecode {
  position: absolute; top: 62px; left: -76px; white-space: nowrap; pointer-events: none;
  font: 90px/120px "Liberation Sans", sans-serif; color: #fff;
}
.layers { width: 96px; }

/* Drawing area */
.workspace { position: relative; flex: 1; display: grid; place-items: center; padding: 40px 0; }
.canvas { position: relative; width: 60%; aspect-ratio: 16 / 9; background: #fff; outline: 1px solid #e4e4e4; }
.handle { position: absolute; width: 10px; height: 10px; background: #fff; border: 2px solid #111; }
.handle.t { top: -9px; }
.handle.m { top: calc(50% - 5px); }
.handle.b { bottom: -9px; }
.handle.l { left: -10px; }
.handle.c { left: calc(50% - 5px); }
.handle.r { right: -10px; }

.size-panel {
  position: absolute; left: 19px; top: 257px;
  display: flex; flex-direction: column; align-items: center; gap: 20px; padding: 20px 12px 18px;
  background: #f9f9f8; border: 2px solid #e9e9eb; border-radius: 10px; box-shadow: 0 6px 10px rgba(0, 0, 0, .1);
}

.range { appearance: none; margin: 0; background: none; }
.range::-webkit-slider-thumb {
  appearance: none; width: 30px; height: 30px; border-radius: 50%;
  background: radial-gradient(circle, #1c3b4d 7px, #fff 8px); border: 1px solid #dcdcdc;
}
.range.tall { writing-mode: vertical-lr; direction: rtl; width: 30px; height: 458px; }
.range.tall::-webkit-slider-runnable-track { width: 6px; border-radius: 3px; background: linear-gradient(to top, #1c3b4d 20px, #878787 20px); }
.range.tall::-webkit-slider-thumb { margin-left: -12px; }
.range.wide { width: 195px; height: 30px; margin: 0 18px 0 20px; }
.range.wide::-webkit-slider-runnable-track { height: 6px; border-radius: 3px; background: linear-gradient(to right, #1c3b4d 20px, #878787 20px); }
.range.wide::-webkit-slider-thumb { margin-top: -12px; }

/* Status bar */
.statusbar { display: flex; align-items: center; height: 58px; padding: 0 19px; border-top: 2px solid #eaeae9; }
.statusbar svg { fill: none; stroke: #1b1b1b; stroke-width: 1.600; }
.statusbar .vline { height: 32px; }
.status-cell { display: flex; align-items: center; gap: 10px; }
.pos { width: 182px; }
.sel { width: 196px; padding-left: 12px; }
.dim { padding-left: 12px; }
.zoom { display: flex; align-items: center; margin-left: auto; }
.combo { display: flex; align-items: center; width: 136px; height: 43px; margin: 0 24px 0 27px; background: #fdfdfd; border: 2px solid #e4e4e4; border-bottom-color: #cacaca; border-radius: 6px; }
.combo select { appearance: none; flex: 1; min-width: 0; height: 38px; padding: 0 0 0 14px; background: none; border: 0; }
.combo .chev { margin-right: 17px; }

/* Taskbar */
.taskbar { display: flex; align-items: center; height: 72px; padding: 0 31px 0 30px; background: #d9d9d9; border-top: 2px solid #adadad; }
.search {
  display: flex; align-items: center; width: 328px; height: 47px; margin: 0 9px 0 21px; padding: 0 3px 0 14px;
  background: #f3f3f3; border: 2px solid #c9c9c9; border-radius: 24px;
}
.search svg { fill: none; stroke: #222; stroke-width: 2.200; }
.search .storm { stroke: none; }
.search input { flex: 1; min-width: 0; padding: 0 0 0 14px; border: 0; background: none; font-size: 21px; font-weight: 300; }
.search input::placeholder { color: #555; opacity: 1; }
.apps { display: flex; gap: 10px; }
.app { position: relative; display: grid; place-items: center; width: 56px; height: 56px; border-radius: 6px; }
.app > svg { width: 36px; height: 36px; }
.app.open::after { content: ""; position: absolute; bottom: 0; left: calc(50% - 5px); width: 10px; height: 5px; border-radius: 3px; background: #858585; }
.app.active { background: #ededed; box-shadow: 0 0 0 1px #cfcfcf; }
.app.active::after { left: calc(50% - 12px); width: 24px; background: #254a5e; }
.weather { display: flex; align-items: center; gap: 11px; margin-left: auto; text-align: left; }
.two-line { display: grid; }
.tray { display: flex; align-items: center; margin-left: 160px; }
.tray-btn svg { fill: none; stroke: #1b1b1b; stroke-width: 1.600; }
.tray-btn.mic svg { stroke: #274f63; }
.mic { margin-left: 31px; }
.ime { width: 24px; margin-left: 26px; font-size: 22px; }
.ime + .ime { margin-left: 34px; }
.ime + .tray-btn:not(.ime) { margin-left: 32px; }
.tray-btn + .tray-btn:nth-child(6) { margin-left: 10px; }
.clock { display: grid; margin-left: 26px; text-align: right; }
.bell { margin-left: 12px; }
```
